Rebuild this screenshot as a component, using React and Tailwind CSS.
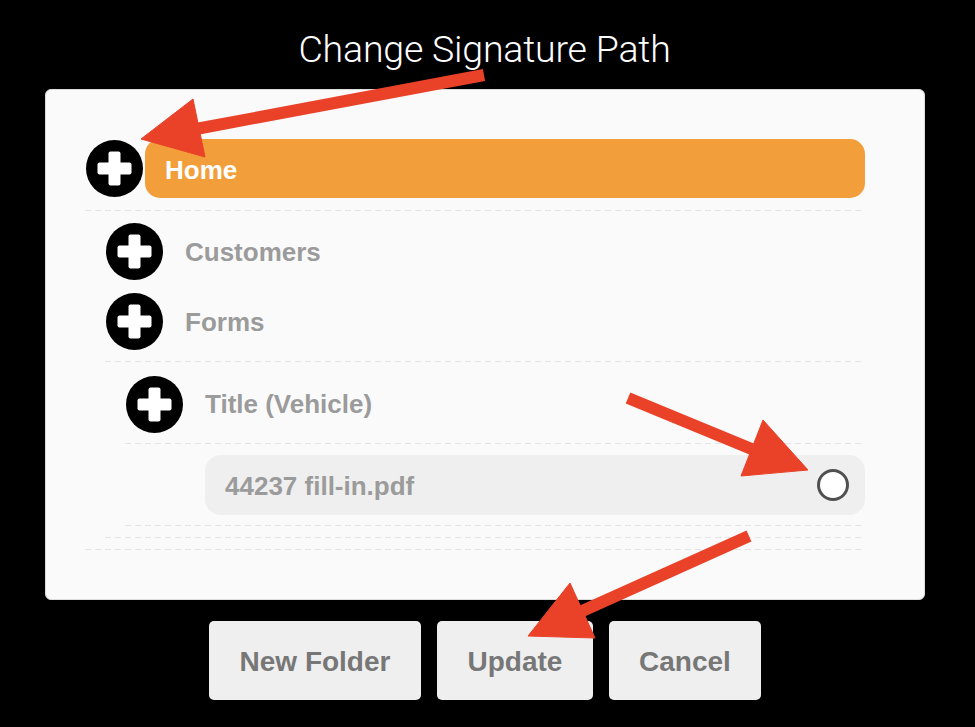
import React from "react";

const Plus = () => (
  <svg width="57" height="57" viewBox="0 0 57 57" className="shrink-0">
    <circle cx="28.5" cy="28.5" r="28.5" fill="#000" />
    <rect x="11.5" y="22.5" width="34" height="12" rx="2" fill="#fff" />
    <rect x="22.5" y="11.5" width="12" height="34" rx="2" fill="#fff" />
  </svg>
);

const Dash = () => (
  <div className="h-px w-full bg-[repeating-linear-gradient(to_right,#e4e4e4_0,#e4e4e4_6px,transparent_6px,transparent_10px)]" />
);

const Arrows = () => (
  <svg className="pointer-events-none absolute left-0 top-0" width="975" height="727" viewBox="0 0 975 727">
    <g fill="#EA4229" stroke="#EA4229">
      <line x1="484" y1="75" x2="196" y2="129" strokeWidth="12" />
      <polygon points="141,139 193,99 205,157" strokeWidth="1" />
      <line x1="628" y1="398" x2="754" y2="450" strokeWidth="12" />
      <polygon points="808,470 763,420 741,476" strokeWidth="1" />
      <line x1="749" y1="536" x2="580" y2="612" strokeWidth="12" />
      <polygon points="528,636 570,583 595,638" strokeWidth="1" />
    </g>
  </svg>
);

export default function App() {
  const list = "font-['Liberation_Sans',Arial,sans-serif] font-bold text-[26px]";
  return (
    <div className="relative h-[727px] w-[975px] overflow-hidden bg-black">
      <div className="flex h-[89px] justify-center pr-[6px] pt-[27px]">
        <h1 className="font-['Roboto',sans-serif] text-[37.5px] font-light leading-[44px] tracking-[-0.2px] text-white">
          Change Signature Path
        </h1>
      </div>
      <div className="ml-[45px] h-[511px] w-[880px] rounded-[6px] border border-[#dcdcdc] bg-[#fafafa] pl-[39px] pr-[59px] pt-[49px]">
        {/* Level 0 */}
        <div>
          <div className="flex h-[59px] items-center">
            <div className="ml-px">
              <Plus />
            </div>
            <div className={`ml-[2px] flex h-[59px] flex-1 items-center rounded-[15px] bg-[#F29F3B] pl-[20px] pt-[3px] text-white ${list}`}>
              Home
            </div>
          </div>
          <div className="pt-[12px]">
            <Dash />
          </div>
          {/* Level 1 */}
          <div className="pl-[20px]">
            <div className="mt-[12px] flex h-[57px] items-center">
              <div className="ml-px">
                <Plus />
              </div>
              <span className={`ml-[22px] pt-[2px] text-[#9b9b9b] ${list}`}>Customers</span>
            </div>
            <div className="mt-[13px] flex h-[57px] items-center">
              <div className="ml-px">
                <Plus />
              </div>
              <span className={`ml-[22px] pt-[2px] text-[#9b9b9b] ${list}`}>Forms</span>
            </div>
            <div className="pt-[11px]">
              <Dash />
            </div>
            {/* Level 2 */}
            <div className="pl-[20px]">
              <div className="mt-[14px] flex h-[57px] items-center">
                <div className="ml-px">
                  <Plus />
                </div>
                <span className={`ml-[22px] text-[#9b9b9b] ${list} text-[25.5px]`}>Title (Vehicle)</span>
              </div>
              <div className="pt-[10px]">
                <Dash />
              </div>
              <div className="pl-[80px] pt-[11px]">
                <div className="flex h-[60px] items-center justify-between rounded-[16px] bg-[#efefef] pl-[20px] pr-[16px]">
                  <span className={`pt-[2px] text-[#9b9b9b] ${list} text-[25px]`}>44237 fill-in.pdf</span>
                  <div className="h-[32px] w-[32px] rounded-full border-[3px] border-[#505050] bg-white" />
                </div>
              </div>
              <div className="pt-[10px]">
                <Dash />
              </div>
            </div>
            <div className="pt-[11px]">
              <Dash />
            </div>
          </div>
          <div className="pt-[11px]">
            <Dash />
          </div>
        </div>
      </div>
      <div className="mt-[21px] flex gap-[16px] pl-[209px]">
        {[
          ["New Folder", "w-[212px]"],
          ["Update", "w-[156px]"],
          ["Cancel", "w-[152px]"],
        ].map(([t, w]) => (
          <div
            key={t}
            className={`flex h-[79px] ${w} items-center justify-center rounded-[5px] bg-[#efefef] pt-[2px] font-['Liberation_Sans',Arial,sans-serif] text-[28px] font-bold text-[#777]`}
          >
            {t}
          </div>
        ))}
      </div>
      <Arrows />
    </div>
  );
}
